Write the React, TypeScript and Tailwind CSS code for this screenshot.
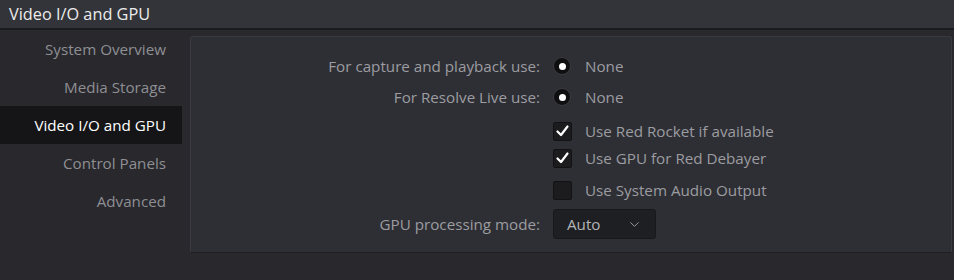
import { ChevronDown } from "lucide-react";

const navItems = [
  "System Overview",
  "Media Storage",
  "Video I/O and GPU",
  "Control Panels",
  "Advanced",
];

function Radio() {
  return (
    <span className="flex h-[18px] w-[18px] items-center justify-center rounded-full border border-[#3b3b40] bg-[#0f0f11]">
      <span className="h-[7px] w-[7px] rounded-full bg-white" />
    </span>
  );
}

function Check({ on }: { on: boolean }) {
  return (
    <span className="flex h-[19px] w-[19px] items-center justify-center rounded-[2px] border border-[#121214] bg-[#1c1c1f]">
      {on && (
        <svg width="13" height="12" viewBox="0 0 13 12" fill="none">
          <path
            d="M1.5 6.5 L5 10 L11.5 1.5"
            stroke="white"
            strokeWidth="2.2"
            strokeLinecap="round"
            strokeLinejoin="round"
          />
        </svg>
      )}
    </span>
  );
}

export default function App() {
  return (
    <div
      className="flex h-[280px] w-[954px] flex-col overflow-hidden bg-[#28282d] text-[15.2px] font-medium"
      style={{ fontFamily: '"Open Sans", "Noto Sans", sans-serif' }}
    >
      <div className="flex h-[30px] shrink-0 items-center border-b-2 border-[#1b1c1f] bg-[#333439] pl-[9px] text-[16.3px] text-[#ececec]">
        Video I/O and GPU
      </div>

      <div className="flex flex-1">
        <div className="flex w-[182px] shrink-0 flex-col">
          {navItems.map((item) => (
            <div
              key={item}
              className={[
                "flex h-[38px] items-center justify-end pr-[16px]",
                item === "Video I/O and GPU"
                  ? "bg-[#151518] text-white"
                  : "text-[#8f8f94]",
              ].join(" ")}
            >
              {item}
            </div>
          ))}
        </div>

        <div className="mt-[6px] ml-[8px] mr-[2px] h-[217px] flex-1 rounded-[3px] border border-[#3a3b40] border-b-[#1e1f22] bg-[#2e2f34] pt-[18px]">
          <div className="grid grid-cols-[349px_auto] gap-x-[13px] text-[#9c9ca1]">
            <div className="flex h-[22px] items-center justify-end">For capture and playback use:</div>
            <div className="flex h-[22px] items-center gap-[14px]">
              <Radio />
              <span>None</span>
            </div>

            <div className="mt-[9px] flex h-[22px] items-center justify-end">For Resolve Live use:</div>
            <div className="mt-[9px] flex h-[22px] items-center gap-[14px]">
              <Radio />
              <span>None</span>
            </div>

            <div className="mt-[12px] h-[22px]" />
            <div className="mt-[12px] flex h-[22px] items-center gap-[13px]">
              <Check on />
              <span>Use Red Rocket if available</span>
            </div>

            <div className="mt-[5px] h-[22px]" />
            <div className="mt-[5px] flex h-[22px] items-center gap-[13px]">
              <Check on />
              <span>Use GPU for Red Debayer</span>
            </div>

            <div className="mt-[10px] h-[22px]" />
            <div className="mt-[10px] flex h-[22px] items-center gap-[13px]">
              <Check on={false} />
              <span>Use System Audio Output</span>
            </div>

            <div className="mt-[8px] flex h-[30px] items-center justify-end">GPU processing mode:</div>
            <div className="mt-[8px] flex h-[30px] items-center">
              <div className="flex h-[30px] w-[103px] items-center justify-between rounded-[3px] border border-[#17181a] bg-[#1e1f23] pl-[13px] pr-[13px] text-[#b4b4b8]">
                <span>Auto</span>
                <ChevronDown size={15} strokeWidth={1.6} className="text-[#9a9a9e]" />
              </div>
            </div>
          </div>
        </div>
      </div>
    </div>
  );
}
